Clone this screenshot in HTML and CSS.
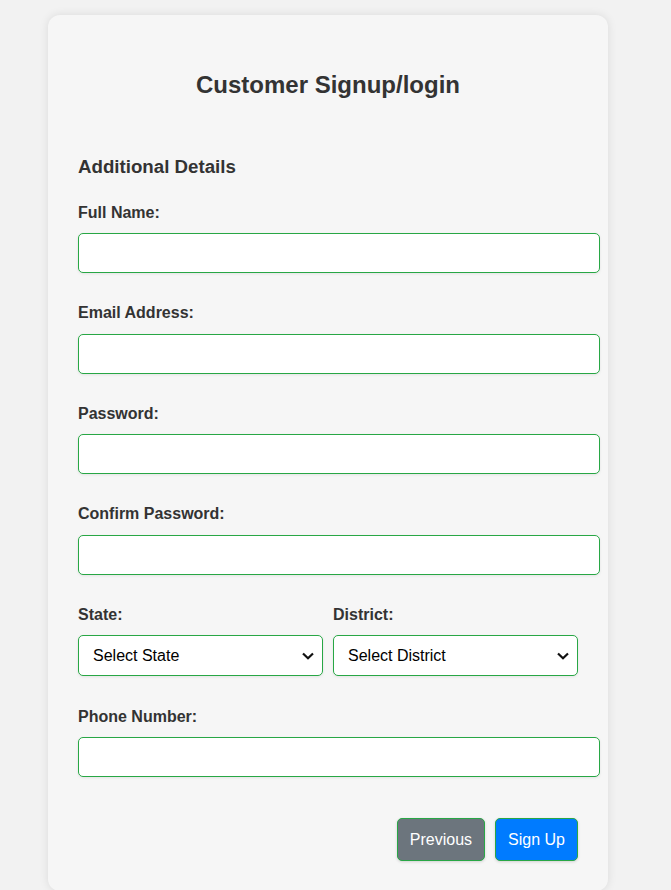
FILE: index.html
```html
<!DOCTYPE html>
<html lang="en">
<head>
<meta charset="utf-8">
<title>Customer Signup/login</title>
<link rel="stylesheet" href="styles.css">
</head>
<body>
  <div class="card">
    <h2 class="title">Customer Signup/login</h2>
    <form class="form">
      <h3 class="section">Additional Details</h3>
      <div class="group">
        <label class="label" for="name">Full Name:</label>
        <input class="input" id="name" type="text">
      </div>
      <div class="group">
        <label class="label" for="email">Email Address:</label>
        <input class="input" id="email" type="email">
      </div>
      <div class="group">
        <label class="label" for="pw">Password:</label>
        <input class="input" id="pw" type="password">
      </div>
      <div class="group">
        <label class="label" for="cpw">Confirm Password:</label>
        <input class="input" id="cpw" type="password">
      </div>
      <div class="row">
        <div class="col">
          <label class="label" for="state">State:</label>
          <select class="select" id="state"><option>Select State</option></select>
        </div>
        <div class="col">
          <label class="label" for="district">District:</label>
          <select class="select" id="district"><option>Select District</option></select>
        </div>
      </div>
      <div class="group">
        <label class="label" for="phone">Phone Number:</label>
        <input class="input" id="phone" type="tel">
      </div>
      <div class="actions">
        <button type="button" class="btn btn-prev">Previous</button>
        <button type="button" class="btn btn-submit">Sign Up</button>
      </div>
    </form>
  </div>
</body>
</html>
```

FILE: styles.css
```css
html, body {
  margin: 0;
  padding: 0;
}
body {
  background: #f2f2f2;
  font-family: "Liberation Sans", Arial, sans-serif;
  color: #333;
}
.card {
  width: 500px;
  margin: 15px 0 0 48px;
  padding: 30px 30px 30px;
  background: #f6f6f6;
  border-radius: 12px;
  box-shadow: 0 0 10px rgba(0, 0, 0, 0.1);
}
.title {
  margin: 26px 0 0;
  text-align: center;
  font-size: 24px;
  font-weight: bold;
  color: #333;
  line-height: 28px;
}
.form {
  margin-top: 57px;
}
.section {
  margin: 0 0 26px;
  font-size: 18.7px;
  line-height: 22px;
  color: #333;
}
.group {
  margin-bottom: 31px;
}
.label {
  display: block;
  font-size: 16px;
  font-weight: bold;
  line-height: 18.4px;
  margin-bottom: 11px;
  color: #333;
}
.input {
  display: block;
  width: 100%;
  padding: 10px;
  border: 1px solid #28a745;
  border-radius: 5px;
  background: #fff;
  font-family: inherit;
  font-size: 16px;
  box-shadow: 0 1px 3px rgba(0, 0, 0, 0.08);
  box-sizing: content-box;
  height: 18px;
}
.row {
  display: grid;
  grid-template-columns: 1fr 1fr;
  gap: 10px;
  margin-bottom: 32px;
}
.select {
  display: block;
  width: 100%;
  height: 41px;
  padding: 0 30px 0 14px;
  border: 1px solid #28a745;
  border-radius: 5px;
  background-color: #fff;
  background-image: url("data:image/svg+xml,%3Csvg xmlns='http://www.w3.org/2000/svg' width='12' height='8' viewBox='0 0 12 8'%3E%3Cpath d='M1 1.5 L6 6.3 L11 1.5' fill='none' stroke='%23111' stroke-width='2.2'/%3E%3C/svg%3E");
  background-repeat: no-repeat;
  background-position: right 8px center;
  background-size: 12px 8px;
  appearance: none;
  -webkit-appearance: none;
  font-family: inherit;
  font-size: 16px;
  color: #000;
  box-shadow: 0 1px 3px rgba(0, 0, 0, 0.08);
}
.actions {
  display: flex;
  justify-content: flex-end;
  gap: 10px;
  margin-top: 41px;
}
.btn {
  height: 43px;
  padding: 0 12px;
  border: 1px solid #28a745;
  border-radius: 5px;
  font-family: inherit;
  font-size: 16px;
  color: #fff;
  box-shadow: 0 1px 3px rgba(0, 0, 0, 0.15);
}
.btn-prev {
  background: #6c757d;
}
.btn-submit {
  background: #007bff;
}
```
